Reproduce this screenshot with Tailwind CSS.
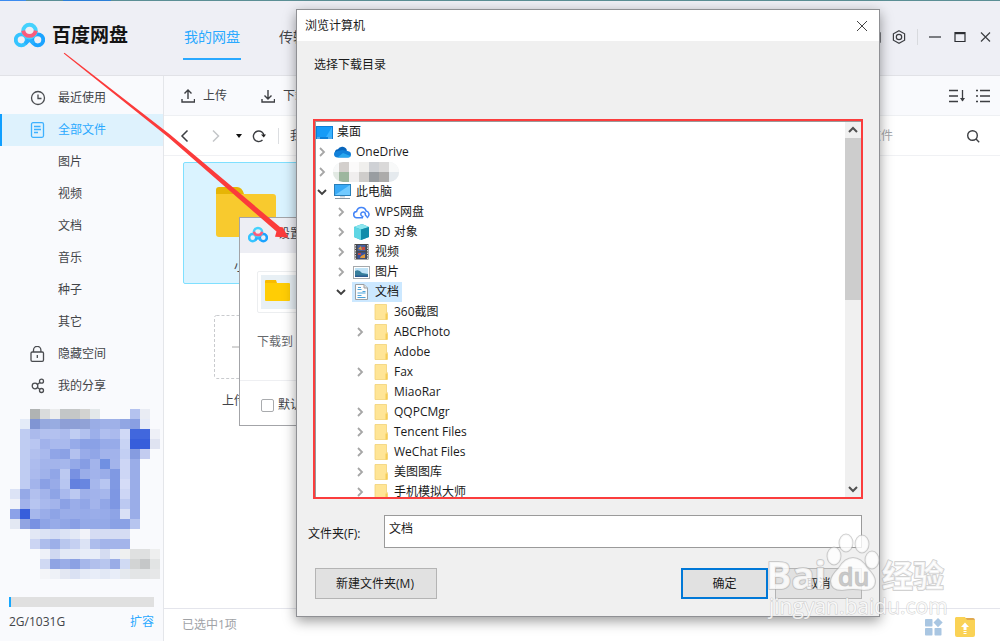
<!DOCTYPE html>
<html lang="zh-CN">
<head>
    <meta charset="UTF-8">
    <meta name="viewport" content="width=device-width, initial-scale=1.0">
    <title>百度网盘</title>
    <script src="https://cdn.jsdelivr.net/npm/@tailwindcss/browser@4"></script>
    <style>
        body {
            font-family: 'Open Sans', 'Noto Sans CJK SC', sans-serif;
        }
    </style>
</head>
<body class="bg-white text-xs text-[#424448] overflow-hidden">
    <!-- shared icons -->
    <svg class="hidden">
        <symbol id="logo" viewBox="0 0 32 26">
            <g fill="none" stroke-width="4">
                <circle cx="7.500" cy="18" r="5.700" stroke="#35c4ff"/>
                <circle cx="24.500" cy="18" r="5.700" stroke="#1aa3ff"/>
                <path d="M11.500 22L16 17.500L20.500 22" stroke="#27b0ff"/>
                <circle cx="16" cy="9" r="6.600" stroke="#45d2fd"/>
                <path d="M9.500 8.500a6.600 6.600 0 0 0 13 0" stroke="#fa5c7c"/>
            </g>
        </symbol>
        <symbol id="right" viewBox="0 0 12 12"><path d="M4 2l4 4-4 4" fill="none" stroke="#a6a6a6" stroke-width="1.8"/></symbol>
        <symbol id="down" viewBox="0 0 12 12"><path d="M2 4l4 4 4-4" fill="none" stroke="#404040" stroke-width="1.9"/></symbol>
        <symbol id="folder" viewBox="0 0 17 16">
            <path d="M3 .5h11.500v8h.8v7H3z" fill="#ffe596" stroke="#f3d277" stroke-width=".8"/>
            <path d="M13.500 9.500h2v6h-2z" fill="#f5cc55"/>
        </symbol>
    </svg>

    <div class="relative flex flex-col h-screen">
        <div class="flex h-px bg-[#5b8f95]"><span class="w-[26px] bg-[#3b8bf0]"></span><span class="w-[37px]"></span><span class="w-12 bg-[#2b7fd8]"></span></div>
        <header class="flex items-center justify-between h-[75px] pl-[14px] pr-[9px] pb-[2px] bg-[#eeeff5] border-b border-[#e1e2e7]">
            <div class="flex items-center h-full">
                <svg class="w-[31px] h-[26px] mb-1"><use href="#logo"/></svg>
                <h1 class="ml-[7px] mb-1 w-[131px] text-[19px] leading-6 font-bold text-[#141414]">百度网盘</h1>
                <nav class="flex gap-[38px] h-full items-center text-sm">
                    <a href="#" class="flex items-center h-11 mt-[2px] px-px text-[#2aa9ff] border-b-2 border-[#2aa9ff]">我的网盘</a>
                    <a href="#">传输列表</a>
                </nav>
            </div>
            <div class="flex items-center gap-[11px]">
                <button aria-label="换肤"><svg class="w-[14px] h-[14px]" fill="none" stroke="#3c3e42" stroke-width="1.300"><path d="M1 3h12v9H1zM10 1v3"/></svg></button>
                <button aria-label="设置"><svg class="w-[14px] h-[14px]" viewBox="0 0 14 14" fill="none" stroke="#3c3e42" stroke-width="1.2"><path d="M7 .8l5.600 3v6.400L7 13.200l-5.600-3V3.800z"/><circle cx="7" cy="7" r="2.700"/></svg></button>
                <span class="w-px h-4 bg-[#d8dade]"></span>
                <div class="flex gap-[13px]">
                    <button aria-label="最小化"><svg class="w-3 h-3" stroke="#3c3e42" stroke-width="1.300"><path d="M0 6h12"/></svg></button>
                    <button aria-label="最大化"><svg class="w-3 h-3" fill="none" stroke="#2c2e32"><path d="M1 1.500h10v9H1z" stroke-width="1.200"/><path d="M1 2.200h10" stroke-width="2"/></svg></button>
                    <button aria-label="关闭"><svg class="w-3 h-3" stroke="#3c3e42" stroke-width="1.200"><path d="M2 1.500l9 9M11 1.500l-9 9"/></svg></button>
                </div>
            </div>
        </header>

        <div class="flex flex-1 min-h-0">
            <aside class="flex flex-col w-[164px] shrink-0 pt-[6px] bg-[#f9fafd] border-r border-[#e4e6ea]">
                <nav class="flex flex-col">
                    <a href="#" class="flex items-center h-8 pl-[30px] gap-3">
                        <svg class="w-4 h-4" fill="none" stroke="#4a4c50" stroke-width="1.300"><circle cx="8" cy="8" r="6.500"/><path d="M8 4.500V8.500h3.500"/></svg>最近使用</a>
                    <a href="#" class="flex items-center h-8 pl-7 gap-3 bg-[#def2fd] text-[#2aa9ff] border-l-2 border-[#109fff]">
                        <svg class="w-4 h-4" fill="none" stroke="#3db1ff" stroke-width="1.300"><rect x="1.500" y=".7" width="12" height="14.600" rx="1.500"/><path d="M4 4.500h6.500M4 7.500h7M4 10.500h4"/></svg>全部文件</a>
                    <a href="#" class="flex items-center h-8 pl-[58px]">图片</a>
                    <a href="#" class="flex items-center h-8 pl-[58px]">视频</a>
                    <a href="#" class="flex items-center h-8 pl-[58px]">文档</a>
                    <a href="#" class="flex items-center h-8 pl-[58px]">音乐</a>
                    <a href="#" class="flex items-center h-8 pl-[58px]">种子</a>
                    <a href="#" class="flex items-center h-8 pl-[58px]">其它</a>
                    <a href="#" class="flex items-center h-8 pl-[30px] gap-3">
                        <svg class="w-4 h-4" viewBox="0 0 16 16" fill="none" stroke="#4a4c50" stroke-width="1.300"><rect x="1" y="6" width="12.500" height="9.300" rx="1.300"/><path d="M3.500 6V4a3.700 3.700 0 0 1 7.400 0v2M7.300 9v3"/></svg>隐藏空间</a>
                    <a href="#" class="flex items-center h-8 pl-[30px] gap-3">
                        <svg class="w-4 h-4" viewBox="0 0 16 16" fill="none" stroke="#4a4c50" stroke-width="1.300"><circle cx="5" cy="8" r="2.800"/><circle cx="11.500" cy="3.200" r="2"/><circle cx="11.500" cy="12.500" r="2"/><path d="M7.400 6.500L9.800 4.500M7.400 9.500l2.400 1.800"/></svg>我的分享</a>
                </nav>
                <svg id="mosaic" class="w-[168px] h-[172px] mt-[7px] overflow-visible shrink-0" aria-hidden="true"></svg>
                <div class="mt-auto pl-[9px] pr-[9px] pb-[11px]">
                    <div class="h-[10px] bg-[#e0e0e0]"><div class="h-full w-[2px] bg-[#16a7ff]"></div></div>
                    <div class="flex justify-between mt-[7px] leading-4"><span>2G/1031G</span><a href="#" class="text-[#2aa9ff]">扩容</a></div>
                </div>
            </aside>

            <main class="flex flex-col flex-1 min-w-0">
                <div class="flex items-center justify-between h-10 pl-[17px] pr-[10px] bg-[#f9fafd] border-b border-[#eef0f3]">
                    <div class="flex items-center gap-[34px]">
                        <button class="flex items-center gap-2"><svg class="w-[14px] h-[14px]" fill="none" stroke="#3c3e42" stroke-width="1.400"><path d="M7 10V1M3.500 4.500L7 1l3.500 3.500M1 10v3h12.500v-3"/></svg>上传</button>
                        <button class="flex items-center gap-2"><svg class="w-[14px] h-[14px]" fill="none" stroke="#3c3e42" stroke-width="1.400"><path d="M7 1v9M3.500 6.500L7 10l3.500-3.500M1 10v3h12.500v-3"/></svg>下载</button>
                    </div>
                    <div class="flex items-center gap-[10px]">
                        <button aria-label="排序"><svg class="w-[17px] h-[14px]" fill="none" stroke="#3c3e42" stroke-width="1.300"><path d="M0 1.500h9M0 7h9M0 12.500h9M13.500 1v11"/><path d="M11 9l2.500 3.500L16 9z" fill="#3c3e42" stroke="none"/></svg></button>
                        <button aria-label="列表"><svg class="w-[14px] h-[14px]" stroke="#3c3e42" stroke-width="1.300"><path d="M0 1.500h2M4 1.500h10M0 7h2M4 7h10M0 12.500h2M4 12.500h10"/></svg></button>
                    </div>
                </div>
                <div class="flex items-center justify-between h-10 pl-4 pr-5 border-b border-[#f0f1f4]">
                    <div class="flex items-center">
                        <button aria-label="后退"><svg class="w-[10px] h-[14px]" fill="none" stroke="#3c3e42" stroke-width="1.500"><path d="M7.500 1.500L2 7l5.500 5.500"/></svg></button>
                        <button aria-label="前进" class="ml-5"><svg class="w-[10px] h-[14px]" fill="none" stroke="#c4c6c9" stroke-width="1.500"><path d="M3 1.500L8.500 7 3 12.500"/></svg></button>
                        <button aria-label="历史" class="ml-4"><svg class="w-[6px] h-1"><path d="M0 0h6L3 4z" fill="#111"/></svg></button>
                        <button aria-label="刷新" class="ml-[10px]"><svg class="w-[14px] h-[14px]" fill="none" stroke="#3c3e42" stroke-width="1.400"><path d="M10.500 11A5.300 5.300 0 1 1 12 7"/><path d="M9 5.500h5L11.800 8.500z" fill="#222" stroke="none"/></svg></button>
                        <span class="ml-3 mr-[11px] w-px h-4 bg-[#dcdee1]"></span>
                        <span>我的网盘</span>
                    </div>
                    <div class="flex items-center gap-[73px] text-[#a4a6aa]">
                        <span>搜索我的文件</span>
                        <button aria-label="搜索"><svg class="w-[14px] h-[14px]" fill="none" stroke="#3c3e42" stroke-width="1.400"><circle cx="6.500" cy="6.500" r="4.800"/><path d="M10 10l3.200 3.200"/></svg></button>
                    </div>
                </div>
                <div class="flex flex-col flex-1 items-start pt-[6px] pl-[19px]">
                    <a href="#" class="flex flex-col items-center w-[126px] h-[122px] pt-6 bg-[#daf3ff] border border-[#7fe0ff] rounded-xs">
                        <svg class="w-[60px] h-[50px]"><path d="M0 15V3q0-3 3-3h18q5 0 7 7v8z" fill="#e6b506"/><path d="M0 7h57q3 0 3 3v37q0 3-3 3H3q-3 0-3-3z" fill="#f8ca2e"/></svg>
                        <span class="mt-[22px] leading-4">小说</span>
                    </a>
                    <a href="#" class="flex flex-col items-center w-[126px] mt-[31px]">
                        <svg class="w-16 h-16" fill="none" stroke="#c9cbce"><rect x=".5" y=".5" width="63" height="63" rx="2" stroke-dasharray="3 2"/><path d="M18 32h28M32 18v28" stroke="#aaa"/></svg>
                        <span class="mt-[14px] leading-4">上传文件</span>
                    </a>
                </div>
                <footer class="flex items-center justify-between h-[33px] pl-[18px] pr-[25px] border-t border-[#e4e5ec] text-[#a0a2a6]">
                    <span>已选中1项</span>
                    <div class="flex items-center gap-3 pt-1">
                        <button aria-label="工具"><svg class="w-[18px] h-[18px]" fill="#a9c6e2"><rect x="0" y="1" width="7.500" height="7.500" rx=".8"/><rect x="0" y="10" width="7.500" height="7.500" rx=".8"/><rect x="9.500" y="10" width="7" height="7.500" rx=".8"/><path d="M13 0l4.700 4.500L13 9.200 8.500 4.500z"/></svg></button>
                        <button aria-label="传输文件夹"><svg class="w-5 h-5"><path d="M10 1h8q2 0 2 3v4H10z" fill="#e0a94e"/><path d="M1 0h9l2 3h8v15q0 2-2 2H2q-2 0-2-2V1z" fill="#fad255"/><path d="M10 5.500l4 4.500h-2.500v3h-3v-3H6zM8.500 14h3v1h-3zM8.500 16h3v1h-3z" fill="#fff"/></svg></button>
                    </div>
                </footer>
            </main>
        </div>

        <!-- download path dialog -->
        <section class="absolute left-[239px] top-[217px] w-[380px] bg-white border border-[#a3a4a8]">
            <div class="flex items-center h-[35px] pl-2 pb-[3px] bg-[#edeef4]">
                <svg class="w-5 h-[17px]"><use href="#logo"/></svg><h2 class="ml-[10px]">设置下载存储路径</h2>
            </div>
            <div class="mt-[18px] ml-[17px] p-[3px] w-80 border border-[#eceef0] rounded-xs">
                <div class="h-[34px] pt-[5px] pl-1 bg-[#e8f0f5]"><svg class="w-[25px] h-[21px]"><path d="M0 1q0-1 1-1h10l1 3H0z" fill="#f8bb00"/><path d="M0 3h24q1 0 1 1v16q0 1-1 1H1q-1 0-1-1z" fill="#ffcd05"/></svg></div>
            </div>
            <p class="mt-5 pl-[17px] pb-[29px] leading-[18px] text-[#66686c]">下载到</p>
            <label class="flex items-center h-[45px] pl-[21px] pt-1 gap-1 border-t border-[#eeeff2]">
                <input type="checkbox" class="appearance-none w-[13px] h-[13px] border border-[#a9abae] rounded-xs bg-white">默认此为下载路径
            </label>
        </section>

        <!-- pointer arrow -->
        <svg class="absolute left-0 top-0 w-[300px] h-[250px] pointer-events-none" fill="#fb3b3b"><path d="M63.700 53.600L64.500 52.700 170 134.500 280 227 282.700 227.200 288.500 237.500 275 236.700 276.500 231.500 168 137z"/></svg>

        <!-- folder browser dialog -->
        <section class="absolute left-[296px] top-[9px] w-[584px] bg-[#f0f0f0] border border-[#8f9094] shadow-[0_4px_12px_rgba(0,0,0,0.4)] text-[#1a1a1a]">
            <div class="flex items-center justify-between h-[31px] pl-2 pr-[11px] bg-white">
                <h2>浏览计算机</h2>
                <button aria-label="关闭"><svg class="w-3 h-3" stroke="#444"><path d="M1 1l10 10M11 1L1 11"/></svg></button>
            </div>
            <p class="pt-[15px] pl-[17px] leading-[18px]">选择下载目录</p>
            <div class="flex mx-4 mt-[45px] h-[380px] border-2 border-[#fb3d3d] bg-white">
                <ul class="flex-1 border-t border-l border-[#9a9a9a] overflow-hidden whitespace-nowrap">
                    <li class="flex items-center h-5 gap-1">
                        <svg class="w-[17px] h-[13px]"><path d="M0 0h17v13H0z" fill="#0e7fd6"/><path d="M1 1h15v10H1z" fill="#159bf7"/><path d="M10 11l6-10v10z" fill="#38b2ff"/><path d="M1 12h3M12 12h4" stroke="#9bd8ff"/></svg>桌面</li>
                    <li class="flex items-center h-5">
                        <button aria-label="展开"><svg class="w-3 h-3"><use href="#right"/></svg></button>
                        <span class="flex items-center gap-[5px] h-5 ml-[5px] pl-px pr-[3px]"><svg class="w-[17px] h-[12px]"><path d="M3.500 10a3.400 3.400 0 0 1 .3-6.700A5 5 0 0 1 13 4.500z" fill="#0865bb"/><path d="M3.500 11.500Q0 11 0 8.200 0 5.500 3.500 5l5-1 5 1Q17 5.500 17 8.400q0 2.800-3 3.100z" fill="#1180d9"/><path d="M3.500 11.500L9 7l7.500 3q-.8 1.500-2.500 1.500z" fill="#29a7ee"/></svg>OneDrive</span></li>
                    <li class="flex items-center h-5">
                        <button aria-label="展开"><svg class="w-3 h-3"><use href="#right"/></svg></button>
                        <span class="flex h-5 ml-[5px] rounded-full overflow-hidden bg-[#eceff0]">
                            <svg class="w-[66px] h-5"><path fill="#f8f9f9" d="M0 0h6v10H0zM56 0h10v10H56z"/><path fill="#d3cfcc" d="M6 0h10v10H6z"/><path fill="#fbfafa" d="M16 0h10v10H16z"/><path fill="#f0efed" d="M26 0h10v10H26z"/><path fill="#cfd1d5" d="M36 0h10v10H36z"/><path fill="#dad9d9" d="M46 0h10v10H46z"/><path fill="#e2e9e3" d="M0 10h6v10H0z"/><path fill="#9db69e" d="M6 10h10v10H6z"/><path fill="#f0eeee" d="M16 10h10v10H16z"/><path fill="#cfcdcb" d="M26 10h10v10H26z"/><path fill="#999da1" d="M36 10h10v10H36z"/><path fill="#acabaa" d="M46 10h10v10H46z"/><path fill="#e5eaee" d="M56 10h10v10H56z"/></svg></span></li>
                    <li class="flex items-center h-5">
                        <button aria-label="折叠"><svg class="w-3 h-3"><use href="#down"/></svg></button>
                        <span class="flex items-center gap-[5px] h-5 ml-[5px] pl-px pr-[3px]"><svg class="w-[17px] h-4"><rect x=".5" y=".5" width="16" height="11" fill="#39aaf6" stroke="#297fb9"/><path d="M1 11L16 1v10z" fill="#71caff"/><path d="M6 12h5v1.500H6z" fill="#c9d3da"/><path d="M1 14.500h15" stroke="#8797a3"/></svg>此电脑</span></li>
                    <li class="flex items-center h-5 pl-[19px]">
                        <button aria-label="展开"><svg class="w-3 h-3"><use href="#right"/></svg></button>
                        <span class="flex items-center gap-[5px] h-5 ml-[5px] pl-px pr-[3px]"><svg class="w-[17px] h-[13px]" fill="none" stroke="#4384f7" stroke-width="1.500"><path d="M10 11.700H4a3.100 3.100 0 0 1-.4-6.200 4.900 4.900 0 0 1 9.500-.5 3.300 3.300 0 0 1 1.700 5.800"/><path d="M10.500 10.500a2.300 2.300 0 1 1 1.800-1.600l2.700 3"/></svg>WPS网盘</span></li>
                    <li class="flex items-center h-5 pl-[19px]">
                        <button aria-label="展开"><svg class="w-3 h-3"><use href="#right"/></svg></button>
                        <span class="flex items-center gap-[5px] h-5 ml-[5px] pl-px pr-[3px]"><svg class="w-[17px] h-4"><path d="M1 3l8-3 7 3v10l-8 3-7-3z" fill="#21b3c8"/><path d="M1 3l8-3 7 3-8 2.500z" fill="#8ce6ef"/><path d="M8 5.500L16 3v10l-8 3z" fill="#118caa"/><path d="M1 3l7 2.500V16l-7-3z" fill="#5fd6e4"/></svg>3D 对象</span></li>
                    <li class="flex items-center h-5 pl-[19px]">
                        <button aria-label="展开"><svg class="w-3 h-3"><use href="#right"/></svg></button>
                        <span class="flex items-center gap-[5px] h-5 ml-[5px] pl-px pr-[3px]"><svg class="w-[17px] h-4"><path d="M1.500 0h14v15.500h-14z" fill="#4a4a4c"/><path d="M2.500 1v14M14.500 1v14" stroke="#d5d5d5" stroke-dasharray="1.500 1"/><path d="M4.500 1h8v6h-8z" fill="#44609f"/><path d="M4.500 8.500h8v6h-8z" fill="#3755a4"/><path d="M5 5l3-3 1 4zM8 12l4-2v4H7z" fill="#e09a38"/><path d="M9 3h3v3H9zM5 9h3v2H5z" fill="#c34a42"/></svg>视频</span></li>
                    <li class="flex items-center h-5 pl-[19px]">
                        <button aria-label="展开"><svg class="w-3 h-3"><use href="#right"/></svg></button>
                        <span class="flex items-center gap-[5px] h-5 ml-[5px] pl-px pr-[3px]"><svg class="w-[17px] h-[13px]"><rect x=".5" y=".5" width="16" height="12" fill="#fff" stroke="#a5a9ac"/><path d="M2 2h13v9H2z" fill="#bfe2f6"/><path d="M2 5q4-2 7 2l6 1v3H2z" fill="#387f9c"/><path d="M2 9.500h13V11H2z" fill="#2c5c91"/></svg>图片</span></li>
                    <li class="flex items-center h-5 pl-[19px]">
                        <button aria-label="折叠"><svg class="w-3 h-3"><use href="#down"/></svg></button>
                        <span class="flex items-center gap-[5px] h-5 ml-[5px] pl-px pr-[3px] bg-[#cce8ff]"><svg class="w-[17px] h-4"><path d="M2.500.5h8.500l3.500 3.500v11.500h-12z" fill="#fcfcfc" stroke="#9b9fa2"/><path d="M11 .5v3.500h3.500" fill="#ddd" stroke="#9b9fa2"/><path d="M4.500 5.500h4M9.500 7.500h3M4.500 9h8M4.500 11.500h4M4.500 13.500h8M5 3.500h3" stroke="#4ba3dc" stroke-width="1.200"/></svg>文档</span></li>
                    <li class="flex items-center h-5 pl-[56px] gap-[5px]"><svg class="w-[17px] h-4"><use href="#folder"/></svg>360截图</li>
                    <li class="flex items-center h-5 pl-[38px]">
                        <button aria-label="展开"><svg class="w-3 h-3"><use href="#right"/></svg></button>
                        <span class="flex items-center gap-[5px] ml-[6px]"><svg class="w-[17px] h-4"><use href="#folder"/></svg>ABCPhoto</span></li>
                    <li class="flex items-center h-5 pl-[56px] gap-[5px]"><svg class="w-[17px] h-4"><use href="#folder"/></svg>Adobe</li>
                    <li class="flex items-center h-5 pl-[38px]">
                        <button aria-label="展开"><svg class="w-3 h-3"><use href="#right"/></svg></button>
                        <span class="flex items-center gap-[5px] ml-[6px]"><svg class="w-[17px] h-4"><use href="#folder"/></svg>Fax</span></li>
                    <li class="flex items-center h-5 pl-[56px] gap-[5px]"><svg class="w-[17px] h-4"><use href="#folder"/></svg>MiaoRar</li>
                    <li class="flex items-center h-5 pl-[38px]">
                        <button aria-label="展开"><svg class="w-3 h-3"><use href="#right"/></svg></button>
                        <span class="flex items-center gap-[5px] ml-[6px]"><svg class="w-[17px] h-4"><use href="#folder"/></svg>QQPCMgr</span></li>
                    <li class="flex items-center h-5 pl-[38px]">
                        <button aria-label="展开"><svg class="w-3 h-3"><use href="#right"/></svg></button>
                        <span class="flex items-center gap-[5px] ml-[6px]"><svg class="w-[17px] h-4"><use href="#folder"/></svg>Tencent Files</span></li>
                    <li class="flex items-center h-5 pl-[38px]">
                        <button aria-label="展开"><svg class="w-3 h-3"><use href="#right"/></svg></button>
                        <span class="flex items-center gap-[5px] ml-[6px]"><svg class="w-[17px] h-4"><use href="#folder"/></svg>WeChat Files</span></li>
                    <li class="flex items-center h-5 pl-[38px]">
                        <button aria-label="展开"><svg class="w-3 h-3"><use href="#right"/></svg></button>
                        <span class="flex items-center gap-[5px] ml-[6px]"><svg class="w-[17px] h-4"><use href="#folder"/></svg>美图图库</span></li>
                    <li class="flex items-center h-5 pl-[38px]">
                        <button aria-label="展开"><svg class="w-3 h-3"><use href="#right"/></svg></button>
                        <span class="flex items-center gap-[5px] ml-[6px]"><svg class="w-[17px] h-4"><use href="#folder"/></svg>手机模拟大师</span></li>
                </ul>
                <div class="flex flex-col w-4 bg-[#f0f0f0] border-t border-[#9a9a9a]">
                    <button aria-label="向上滚动" class="flex items-center justify-center h-4"><svg class="w-3 h-3" fill="none" stroke="#505050" stroke-width="2"><path d="M2 8l4-4 4 4"/></svg></button>
                    <div class="h-[162px] bg-[#cdcdcd]"></div>
                    <button aria-label="向下滚动" class="flex items-center justify-center h-4 mt-auto"><svg class="w-3 h-3" fill="none" stroke="#505050" stroke-width="2"><path d="M2 4l4 4 4-4"/></svg></button>
                </div>
            </div>
            <div class="flex items-center mt-4 pl-[11px] pr-[17px]">
                <label for="folder-name" class="w-[76px] pt-1">文件夹(F):</label>
                <input id="folder-name" type="text" value="文档" class="flex-1 h-[33px] pl-1 pb-2 bg-white border border-[#9a9a9a]">
            </div>
            <div class="flex items-center mt-5 pb-[17px] pl-[18px] pr-[17px]">
                <button class="w-[122px] h-[31px] mr-auto pr-[2px] bg-[#e1e1e1] border border-[#b4b4b4]">新建文件夹(M)</button>
                <button class="w-[87px] h-[31px] mr-[7px] bg-[#e1e1e1] border-2 border-[#0078d7]">确定</button>
                <button class="w-[87px] h-[31px] bg-[#e1e1e1] border border-[#b4b4b4]">取消</button>
            </div>
        </section>

        <!-- watermark -->
        <svg class="absolute right-[52px] bottom-[19px] w-[182px] h-[92px] pointer-events-none" fill="#fff" fill-opacity=".8" stroke="#aaa" stroke-opacity=".55" stroke-width="2" stroke-linejoin="round" paint-order="stroke" font-weight="bold">
            <text x="0" y="59" font-size="38">Bai</text>
            <ellipse cx="68" cy="26" rx="6.500" ry="8.500"/><ellipse cx="80" cy="13" rx="6.500" ry="8.500"/><ellipse cx="96" cy="14" rx="6.500" ry="8.500"/><ellipse cx="106" cy="30" rx="6.500" ry="8.500"/>
            <path d="M87 28q8 0 14 10 8 8 8 13 0 9-11 9-6-1-11-1t-11 1q-11 0-11-9 0-5 8-13 6-10 14-10z"/>
            <text x="72" y="56" font-size="25" font-weight="600" fill="#bdbdbd" stroke-width="1">du</text>
            <text x="116" y="57" font-size="31">经验</text>
            <text x="3" y="84" font-size="21" font-weight="normal" stroke-width="1">jingyan.baidu.com</text>
        </svg>
    </div>

    <script>
        // pixelated account block, one entry per 10px cell, '-' is empty
        const rows = [
            '- - b0b3b3 d9dbdc ecedee c3c6c7 c5c7c7 d3d3d1 e3e8ea - - - b4c2ef e9ecf4 -',
            '- e4ebf8 8095d3 96a9df 98ace1 8e9fd6 8d9fd6 91a2d6 9aade6 9fb1e8 9fb1e8 91a6e3 899fe2 e5eaf7 -',
            '- bfccf2 abbaec b3c1ef b3c1ef adbcee c0cdf2 b2c1ef 9cafea b0bfef abbaed d0d9f6 4167dd 4167dd eef0f7',
            '- bfccf2 b9c6f1 a1b2eb a9b9ed a9b9ed 97abe9 8aa1e6 8aa1e6 97abe9 97abe9 c8d3f4 375edb 375edb dfe3f1',
            '- bfccf2 b2c0ee a9b9ed 90a5e7 8ba1e5 b3c1ef 98abe9 91a6e7 a2b3eb a2b3eb c3cff3 869ce0 c3ccf0 -',
            '- bfccf2 adbcee a3b4eb a3b4eb a6b7ec 94a9e8 869de4 a3b4eb 7090e2 a3b4eb cdd6f5 9aade8 - -',
            '- bfccf2 abbaed a0b2ea 91a6e7 bcc9f1 7891e2 9aade9 a2b3eb 9aade9 8099e3 cdd6f5 9aade8 - -',
            '- bfccf2 a3b4eb 8aa0e5 98abe8 b8c6f1 6381df 6886e0 a6b7ec b8c6f1 8099e3 d5dcf7 9aade8 - -',
            'dce3f6 95a9e7 b2c0ee a3b4eb 8ea4e6 a9b9ed bcc9f1 9eb0ea a2b3eb a6b7ec 7e97e3 cdd6f5 9aade8 - -',
            'f0f2f9 a1b2ea b7c5f0 a9b9ed a3b4eb 8ba1e5 9aade9 91a6e7 a3b4eb 92a7e7 7e97e3 bcc9f1 9aade8 - -',
            '8ca2e8 375edb a6b7ec 9aade9 8ea4e6 9aade9 9aade9 97abe9 9aade9 97abe9 8ea4e6 d9e0f6 9aade8 - -',
            'e3e8f3 92a5e2 7891e2 8ea4e6 97abe8 91a6e6 899fe5 94a9e7 94a9e7 94a9e7 8aa1e5 8aa1e5 b7c5ef - -',
            '- - e3e8f5 dce3f5 d3dcf4 dce3f5 e3e9f6 f2f3f9 d5dcf3 d5dcf3 d5dcf3 d5dcf3 - - -',
            '- - ccd5f3 adbdec 9cafe8 b9c7ee c5d0f1 dce3f5 adbdec a3b4ea a3b4ea a3b4ea - - -',
            '- - - eef1f8 cfd8f1 e3e9f6 e3e9f6 e8edf8 e8edf8 d5dcf1 e8edf8 eff0f0 dfe0e0 dfe0e0 eeefef',
            '- - - d0d9f3 8fa4e3 9aade7 8ba1e3 a6b7ea b2c0ec b8c6ee 99ace6 d0daf3 d2d4d4 c5c7c8 e2e4e4',
            '- - - f4f5f8 eef1f7 e3e7f2 dae1f3 e5eaf6 e8edf8 e2e8f5 e8edf8 e5e9ee e3e5e6 e3e5e6 e6e7e8'
        ];
        const mosaic = document.getElementById('mosaic');
        rows.forEach((row, y) => {
            row.split(' ').forEach((color, x) => {
                if (color === '-') return;
                const rect = document.createElementNS('http://www.w3.org/2000/svg', 'rect');
                rect.setAttribute('x', 10 + x * 10);
                rect.setAttribute('y', y * 10);
                rect.setAttribute('width', 10);
                rect.setAttribute('height', 10);
                rect.setAttribute('fill', '#' + color);
                mosaic.appendChild(rect);
            });
        });
    </script>
</body>
</html>
